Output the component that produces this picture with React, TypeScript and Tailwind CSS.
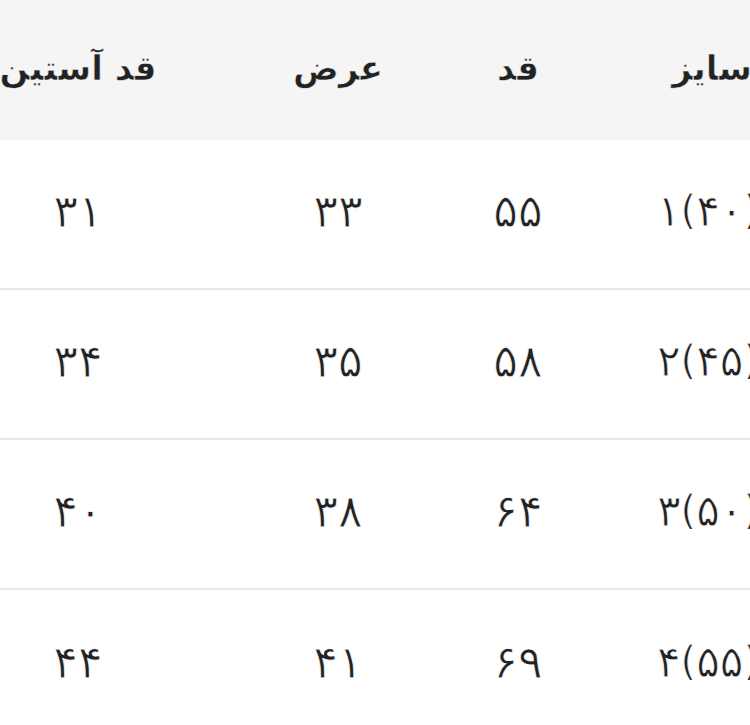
import React from "react";

const header = ["سایز", "قد", "عرض", "قد آستین"];
const rows = [
  ["۱(۴۰)", "۵۵", "۳۳", "۳۱"],
  ["۲(۴۵)", "۵۸", "۳۵", "۳۴"],
  ["۳(۵۰)", "۶۴", "۳۸", "۴۰"],
  ["۴(۵۵)", "۶۹", "۴۱", "۴۴"],
];

function Cell({ text, tight }: { text: string; tight?: boolean }) {
  const parts = text.split(/([()])/).filter((p) => p.length > 0);
  return (
    <span dir="ltr" className="inline-flex items-center [-webkit-text-stroke:0.8px_white]">
      {parts.map((p, k) =>
        p === "(" || p === ")" ? (
          <span key={k} className="text-[40px] leading-none -mt-[2px]">{p}</span>
        ) : (
          <span key={k} className={tight ? "text-[44px] leading-none tracking-[-4px]" : "text-[46px] leading-none"}>{p}</span>
        )
      )}
    </span>
  );
}

export default function App() {
  return (
    <div className="w-[750px] h-[725px] overflow-hidden bg-white" style={{ fontFamily: '"DejaVu Sans", "Noto Sans", sans-serif' }}>
      <div className="w-[908px] -ml-[92px]" dir="rtl">
        <div className="grid grid-cols-[208px_180px_180px_340px] h-[140px] bg-[#f5f5f5] items-center text-[34px] font-bold text-[#222] pb-[4px] [-webkit-text-stroke:0.6px_#f5f5f5]">
          {header.map((h) => (
            <div key={h} className="text-center whitespace-nowrap">{h}</div>
          ))}
        </div>
        {rows.map((r, i) => (
          <div
            key={i}
            className={
              i < rows.length - 1
                ? "grid grid-cols-[208px_180px_180px_340px] h-[150px] items-center border-b-2 border-[#e8e8e8] text-[#222] pb-[6px]"
                : "grid grid-cols-[208px_180px_180px_340px] h-[150px] items-center text-[#222] pb-[6px]"
            }
          >
            {r.map((c, j) => (
              <div key={j} className={j === 0 ? "flex justify-center whitespace-nowrap pr-[8px]" : "flex justify-center whitespace-nowrap"}>
                <Cell text={c} tight={j === 0} />
              </div>
            ))}
          </div>
        ))}
      </div>
    </div>
  );
}
